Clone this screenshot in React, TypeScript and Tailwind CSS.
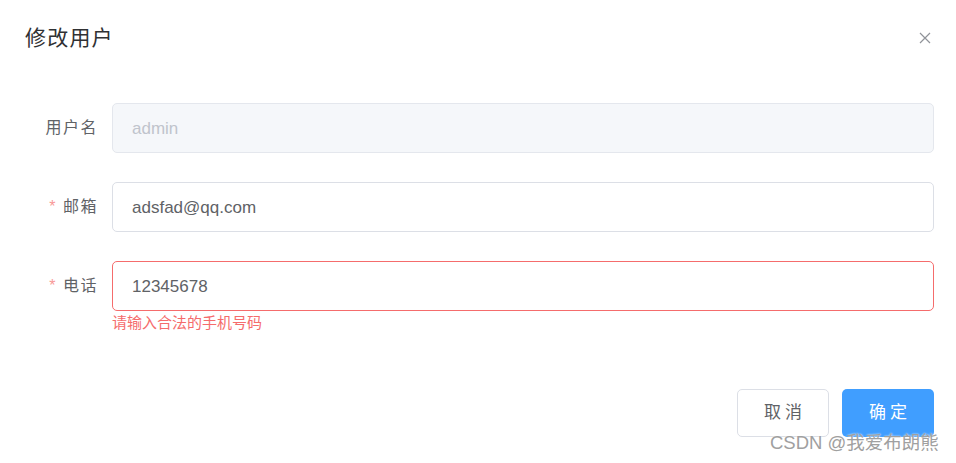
const FONT = "font-['Liberation_Sans','Noto_Sans_CJK_SC',sans-serif]";

function Row({
  label,
  required,
  value,
  disabled,
  error,
}: {
  label: string;
  required?: boolean;
  value: string;
  disabled?: boolean;
  error?: string;
}) {
  return (
    <div className="flex items-start">
      <label className="w-[112px] shrink-0 pr-[14px] h-[50px] flex items-center justify-end text-[16px] tracking-[1.5px] text-[#606266]">
        {required && <span className="text-[#f89898] mr-[6px] text-[16px]">*</span>}
        {label}
      </label>
      <div className="flex-1 relative">
        <input
          readOnly
          value={value}
          disabled={disabled}
          className={`w-full h-[50px] rounded-[5px] border px-[19px] pt-[1px] text-[17px] outline-none ${FONT} ${
            disabled
              ? "bg-[#f5f7fa] border-[#e4e7ed] text-[#c0c4cc]"
              : error
              ? "bg-white border-[#f56c6c] text-[#606266]"
              : "bg-white border-[#dcdfe6] text-[#606266]"
          }`}
        />
        {error && (
          <p className="absolute left-0 top-[52px] text-[15px] leading-[20px] text-[#f56c6c]">{error}</p>
        )}
      </div>
    </div>
  );
}

export default function App() {
  return (
    <div className={`w-[956px] h-[463px] bg-white relative overflow-hidden ${FONT}`}>
      <div className="h-[76px] px-[25px] flex items-center justify-between">
        <h2 className="text-[21px] text-[#303133] tracking-[1.2px]">修改用户</h2>
        <svg width="14" height="14" viewBox="0 0 14 14" className="mr-[-1px]">
          <path d="M2 2 L12 12 M12 2 L2 12" stroke="#909399" strokeWidth="1.2" />
        </svg>
      </div>

      <div className="pt-[27px] pr-[22px] flex flex-col gap-[29px]">
        <Row label="用户名" value="admin" disabled />
        <Row label="邮箱" value="adsfad@qq.com" required />
        <Row label="电话" value="12345678" required error="请输入合法的手机号码" />
      </div>

      <div className="mt-[78px] pr-[22px] flex justify-end gap-[13px]">
        <button className="w-[92px] h-[48px] rounded-[5px] border border-[#dcdfe6] bg-white text-[17px] text-[#606266] tracking-[4px] pl-[4px]">
          取消
        </button>
        <button className="w-[92px] h-[48px] rounded-[5px] bg-[#409eff] text-[17px] text-white tracking-[4px] pl-[4px]">
          确定
        </button>
      </div>

      <div className="absolute left-[770px] top-[429px] text-[18.5px] text-[#a0a0a0] [text-shadow:0_0_2px_#fff]">
        CSDN @我爱布朗熊
      </div>
    </div>
  );
}
